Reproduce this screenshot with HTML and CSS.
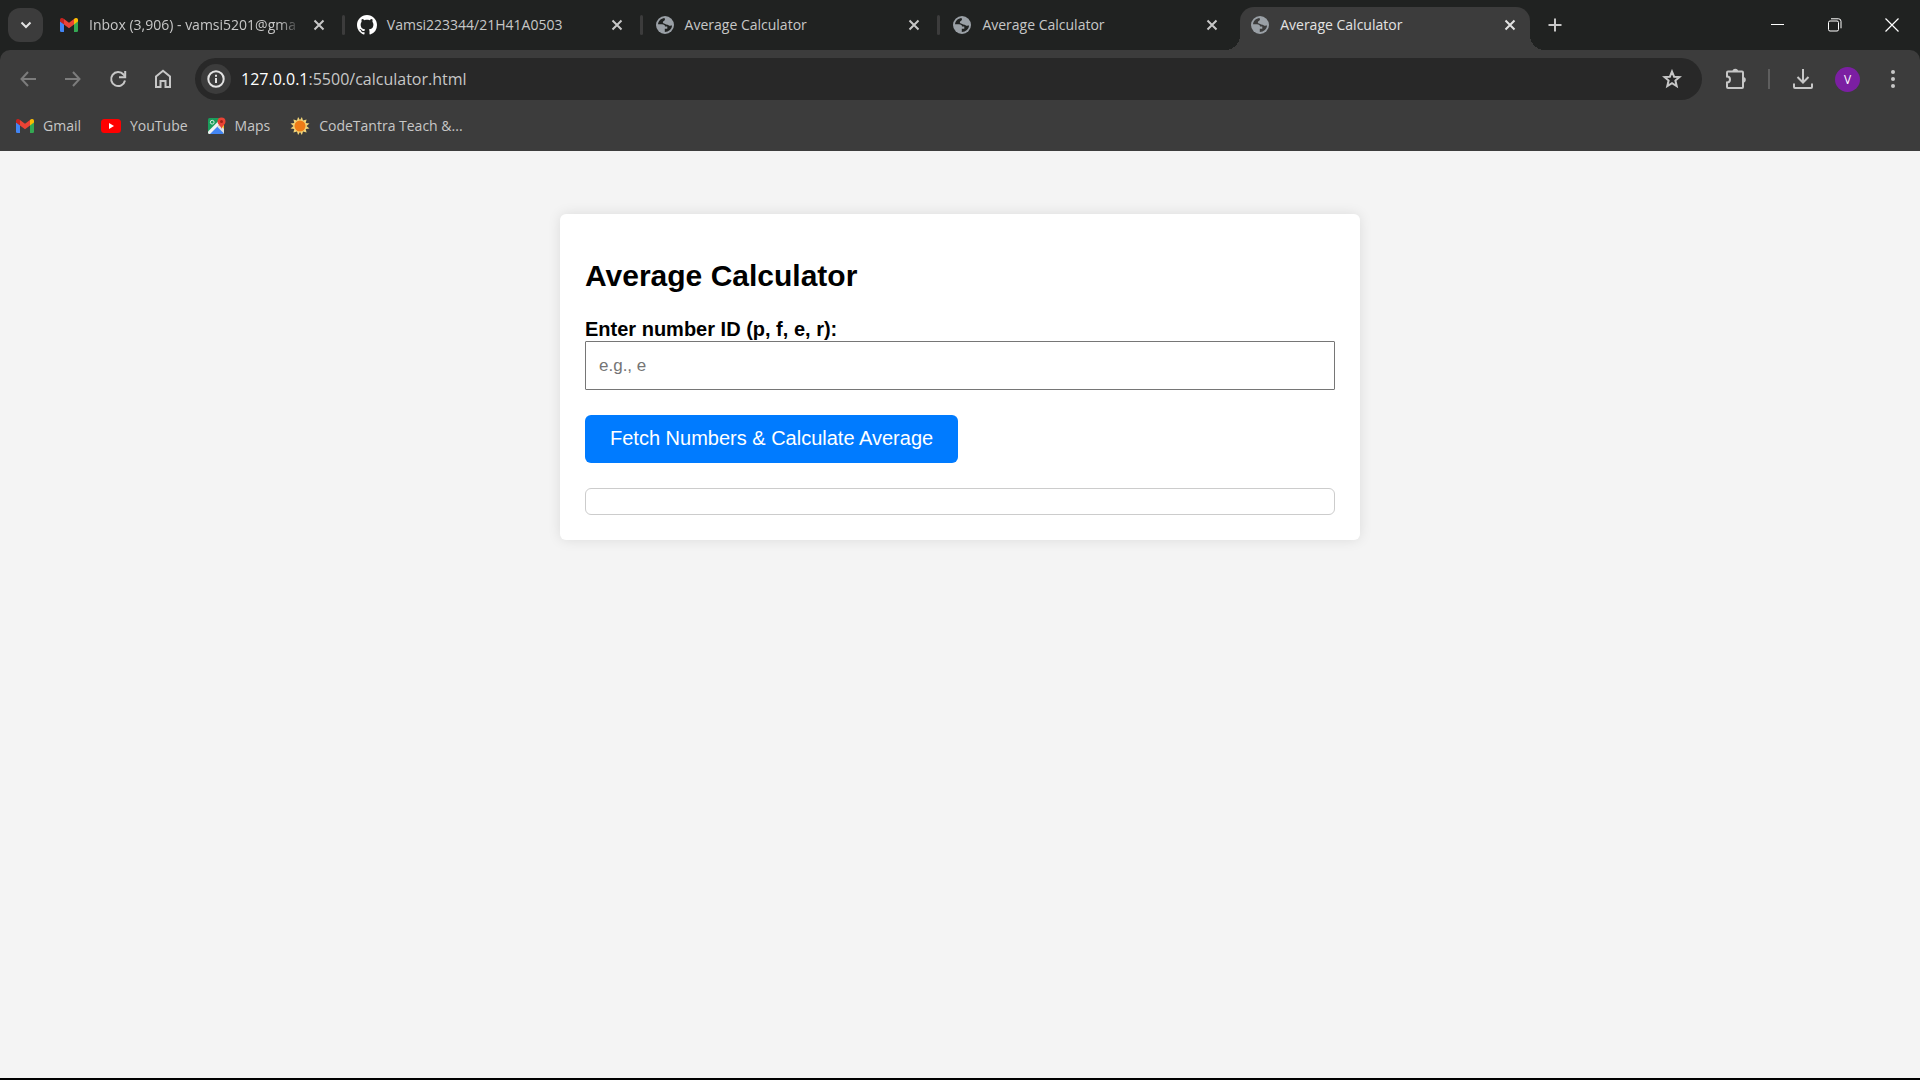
FILE: index.html
```html
<!DOCTYPE html>
<html lang="en">
<head>
<meta charset="utf-8">
<title>Average Calculator</title>
<link rel="stylesheet" href="styles.css">
</head>
<body>
<svg class="sprite" aria-hidden="true">
  <symbol id="gmail" viewBox="0 0 18 14">
    <path fill="#4285f4" d="M0 3l4 3v8H1.300A1.300 1.300 0 0 1 0 12.700z"/>
    <path fill="#34a853" d="M14 6l4-3v9.700a1.300 1.300 0 0 1-1.300 1.300H14z"/>
    <path fill="#ea4335" d="M4 1l5 3.800L14 1v5.500L9 10.300 4 6.500z"/>
    <path fill="#c5221f" d="M0 2C0 .1 2-.6 3.400.5L4 1v5.500L0 3.500z"/>
    <path fill="#fbbc04" d="M18 2c0-1.900-2-2.600-3.400-1.500L14 1v5.500l4-3z"/>
  </symbol>
  <symbol id="globe" viewBox="0 0 18 18">
    <circle cx="9" cy="9" r="9" fill="#9aa0a6"/>
    <path fill="var(--land)" d="M8.500 1.900C5 2.200 2.200 5 2 8.300H6C8 8.300 9 9.300 9 10.500H11.300V12.800H8.800V16C12.800 16 16 13 16 9.600 14.800 9.600 13.600 10 12.500 9.200 11.500 8.400 10.600 8.700 9.600 8.200 8.700 7.600 6.800 7.400 6.800 6.200 6.800 5 9 5 9 3.600z"/>
  </symbol>
  <symbol id="close" viewBox="0 0 12 12"><path d="M1.500 1.500l9 9M10.500 1.500l-9 9" fill="none" stroke="currentColor" stroke-width="2"/></symbol>
</svg>

<header class="browser">
  <div class="tabstrip">
    <button class="tab-search" aria-label="Search tabs"><svg width="12" height="8" viewBox="0 0 12 8"><path d="M1.500 1.500L6 6l4.500-4.500" fill="none" stroke="currentColor" stroke-width="2"/></svg></button>
    <nav class="tabs" aria-label="Tabs">
      <div class="tab divided">
        <span class="favicon"><svg width="18" height="14"><use href="#gmail"/></svg></span>
        <a class="tab-title fade" href="#">Inbox (3,906) - vamsi5201@gma</a>
        <button class="tab-close" aria-label="Close tab"><svg width="12" height="12"><use href="#close"/></svg></button>
      </div>
      <div class="tab divided">
        <span class="favicon"><svg width="20" height="20" viewBox="0 0 16 16"><path fill="#fff" d="M8 0C3.580 0 0 3.580 0 8c0 3.540 2.290 6.530 5.470 7.590.4.070.55-.17.55-.38 0-.19-.01-.82-.01-1.490-2.010.37-2.530-.49-2.690-.94-.09-.23-.48-.94-.82-1.130-.28-.15-.68-.52-.01-.53.63-.01 1.080.58 1.230.82.72 1.210 1.870.87 2.330.66.070-.52.28-.87.51-1.070-1.780-.2-3.640-.89-3.640-3.950 0-.87.31-1.590.82-2.150-.08-.2-.36-1.020.08-2.120 0 0 .67-.21 2.200.82.64-.18 1.320-.27 2-.27s1.360.09 2 .27c1.530-1.040 2.200-.82 2.200-.82.44 1.100.16 1.920.08 2.120.51.56.82 1.270.82 2.150 0 3.070-1.870 3.750-3.650 3.950.29.25.54.73.54 1.480 0 1.070-.01 1.930-.01 2.200 0 .21.15.46.55.38A8.010 8.010 0 0 0 16 8c0-4.420-3.580-8-8-8z"/></svg></span>
        <a class="tab-title" href="#">Vamsi223344/21H41A0503</a>
        <button class="tab-close" aria-label="Close tab"><svg width="12" height="12"><use href="#close"/></svg></button>
      </div>
      <div class="tab divided">
        <span class="favicon"><svg width="18" height="18"><use href="#globe"/></svg></span>
        <a class="tab-title" href="#">Average Calculator</a>
        <button class="tab-close" aria-label="Close tab"><svg width="12" height="12"><use href="#close"/></svg></button>
      </div>
      <div class="tab">
        <span class="favicon"><svg width="18" height="18"><use href="#globe"/></svg></span>
        <a class="tab-title" href="#">Average Calculator</a>
        <button class="tab-close" aria-label="Close tab"><svg width="12" height="12"><use href="#close"/></svg></button>
      </div>
      <div class="tab active">
        <span class="favicon"><svg width="18" height="18"><use href="#globe"/></svg></span>
        <a class="tab-title" href="#" aria-current="page">Average Calculator</a>
        <button class="tab-close" aria-label="Close tab"><svg width="12" height="12"><use href="#close"/></svg></button>
      </div>
    </nav>
    <button class="new-tab" aria-label="New tab"><svg width="14" height="14" viewBox="0 0 14 14"><path d="M7 .5v13M.5 7h13" stroke="currentColor" stroke-width="2"/></svg></button>
    <div class="window-controls">
      <button aria-label="Minimize"><svg width="14" height="14" viewBox="0 0 14 14"><path d="M0 6.500h13" stroke="currentColor"/></svg></button>
      <button aria-label="Restore"><svg width="14" height="14" viewBox="0 0 14 14" fill="none" stroke="currentColor"><rect x=".5" y="3" width="10" height="10" rx="1.500"/><path d="M3 .8h7.500a2.500 2.500 0 0 1 2.500 2.500v7"/></svg></button>
      <button aria-label="Close"><svg width="14" height="14" viewBox="0 0 14 14"><path d="M.5.5l13 13M13.500.5l-13 13" stroke="currentColor" stroke-width="1.200"/></svg></button>
    </div>
  </div>

  <div class="chrome">
    <div class="toolbar">
      <button class="tool dim" aria-label="Back"><svg width="16" height="16" viewBox="0 0 16 16"><path d="M16 8H2M8 1L1.500 8 8 15" fill="none" stroke="currentColor" stroke-width="2"/></svg></button>
      <button class="tool dim" aria-label="Forward"><svg width="16" height="16" viewBox="0 0 16 16"><path d="M0 8h14M8 1l6.500 7L8 15" fill="none" stroke="currentColor" stroke-width="2"/></svg></button>
      <button class="tool" aria-label="Reload"><svg width="18" height="18" viewBox="0 0 18 18" fill="none" stroke="currentColor" stroke-width="2"><path d="M16 10.500A7 7 0 1 1 14.500 4.500L16 6.500"/><path d="M16.200 1v6.300H10"/></svg></button>
      <button class="tool" aria-label="Home"><svg width="18" height="20" viewBox="0 0 18 20" fill="none" stroke="currentColor" stroke-width="2"><path d="M2 7.500l7-5.700 7 5.700V18h-4.500v-6h-5v6H2z"/></svg></button>
      <div class="address">
        <button class="site-info" aria-label="Site information"><svg width="18" height="18" viewBox="0 0 18 18"><circle cx="9" cy="9" r="7.700" fill="none" stroke="currentColor" stroke-width="2"/><path d="M9 8v5M9 4.700v2" stroke="currentColor" stroke-width="2"/></svg></button>
        <a class="url" href="#"><span class="host">127.0.0.1</span>:5500/calculator.html</a>
        <button class="star" aria-label="Bookmark this tab"><svg width="20" height="20" viewBox="0 0 20 20"><path d="M10 2.500l2.100 5.200 5.400.4-4.100 3.500 1.300 5.400L10 14.100 5.300 17l1.300-5.400-4.100-3.500 5.400-.4z" fill="none" stroke="currentColor" stroke-width="2"/></svg></button>
      </div>
      <button class="tool" aria-label="Extensions"><svg width="22" height="22" viewBox="0 0 22 22"><path d="M2 4.500Q2 3.500 3 3.500H17q1 0 1 1V19q0 1-1 1H3q-1 0-1-1v-4.500a3 3 0 0 0 0-6z" fill="none" stroke="currentColor" stroke-width="2"/><path fill="currentColor" d="M7.500 3.500a2.800 2.800 0 0 1 5.600 0zM18 9a2.800 2.800 0 0 1 0 5.600z"/></svg></button>
      <span class="tool-divider"></span>
      <button class="tool" aria-label="Downloads"><svg width="20" height="20" viewBox="0 0 20 20" fill="none" stroke="currentColor" stroke-width="2"><path d="M10 0v13M4.500 8l5.500 5.500L15.500 8M1 14.500V18q0 1 1 1h16q1 0 1-1v-3.500"/></svg></button>
      <button class="tool" aria-label="Profile"><span class="avatar">V</span></button>
      <button class="tool" aria-label="Menu"><svg width="4" height="18" viewBox="0 0 4 18" fill="currentColor"><circle cx="2" cy="2" r="2"/><circle cx="2" cy="9" r="2"/><circle cx="2" cy="16" r="2"/></svg></button>
    </div>

    <nav class="bookmarks" aria-label="Bookmarks">
      <a href="#"><svg width="18" height="14"><use href="#gmail"/></svg>Gmail</a>
      <a href="#"><svg width="20" height="14" viewBox="0 0 20 14"><rect width="20" height="14" rx="3.500" fill="#f00"/><path d="M8 4l5 3-5 3z" fill="#fff"/></svg>YouTube</a>
      <a href="#"><svg width="18" height="18" viewBox="0 0 18 18"><rect y="1" width="16" height="16" rx="1.500" fill="#1a9c5b"/><path d="M10 8l6-2v9.500q0 1.500-1.500 1.500z" fill="#fbc02d"/><path d="M1 17l8-8.500 7 7.500-1 1z" fill="#4285f4"/><path d="M0 14.500L11.500 3 13 6 2 17H1.500Q0 17 0 15.500z" fill="#f1f1f1"/><path d="M9 9.500l7 7V12l-4-4z" fill="#dce0e6"/><circle cx="4.200" cy="5.200" r="1.900" fill="none" stroke="#d8f0e0"/><path d="M13.500 12c-.3-3-4-4-4-7.500a4 4 0 0 1 8 0c0 3.500-3.700 4.500-4 7.500z" fill="#ea4335"/><circle cx="13.500" cy="4.500" r="1.500" fill="#9f2219"/></svg>Maps</a>
      <a href="#"><svg width="20" height="18" viewBox="-1 0 20 18"><path d="M9 3L10.900 0 12 3.600 15.600 2.400 14.700 6 18.500 6.600 15.500 9 18.500 11.400 14.700 12 15.600 15.600 12 14.400 10.900 18 9 15 7.100 18 6 14.400 2.400 15.600 3.300 12-.5 11.400 2.500 9-.5 6.600 3.300 6 2.400 2.400 6 3.600 7.100 0z" fill="#f3d477"/><circle cx="9" cy="9" r="5.500" fill="#ee7c16"/></svg>CodeTantra Teach &amp;...</a>
    </nav>
  </div>
</header>

<main class="page">
  <form class="card">
    <h1>Average Calculator</h1>
    <label for="number-id">Enter number ID (p, f, e, r):</label>
    <input id="number-id" type="text" placeholder="e.g., e">
    <button class="submit" type="button">Fetch Numbers &amp; Calculate Average</button>
    <output class="result" for="number-id"></output>
  </form>
</main>
</body>
</html>
```
FILE: styles.css
```css
* {
  box-sizing: border-box;
}

body {
  margin: 0;
  min-height: 100vh;
  display: flex;
  flex-direction: column;
  font-family: "Liberation Sans", Arial, sans-serif;
  background: #f4f4f4;
  border-bottom: 2px solid #000;
}

button {
  margin: 0;
  padding: 0;
  border: 0;
  background: none;
  color: inherit;
  font: inherit;
}

a {
  color: inherit;
  text-decoration: none;
}

svg {
  display: block;
  flex: none;
}

.sprite {
  position: absolute;
  width: 0;
  height: 0;
}

/* Browser frame */
.browser {
  --land: #202221;
  background: #202221;
  color: #c7c7c7;
  font-family: "Open Sans", "Noto Sans", sans-serif;
  font-size: 14px;
  line-height: 20px;
}

.tabstrip {
  display: flex;
  height: 50px;
  padding-left: 8px;
}

.tab-search {
  display: grid;
  place-items: center;
  width: 35px;
  height: 34px;
  margin: 8px 6px 0 0;
  border-radius: 12px;
  background: #3c3c3c;
  color: #e3e3e3;
}

.tabs {
  display: flex;
  flex: 0 1 1481px;
  min-width: 0;
  gap: 8px;
  padding-top: 7px;
}

.tab {
  position: relative;
  display: flex;
  flex: 1 1 0;
  min-width: 0;
  align-items: center;
  padding: 0 14px 7px 10px;
}

.favicon {
  display: grid;
  place-items: center;
  width: 20px;
  margin-right: 10px;
}

.divided::after {
  content: "";
  position: absolute;
  top: 8px;
  right: -6px;
  width: 3px;
  height: 20px;
  border-radius: 2px;
  background: #3c3c3c;
}

.tab-title {
  flex: 1;
  min-width: 0;
  margin-right: 12px;
  white-space: nowrap;
}

.fade {
  -webkit-mask-image: linear-gradient(to right, #000 190px, transparent 212px);
  mask-image: linear-gradient(to right, #000 190px, transparent 212px);
}

.active {
  --land: #3c3c3c;
  border-radius: 14px 14px 0 0;
  background: #3c3c3c;
  color: #e3e3e3;
}

.active::before,
.active::after {
  content: "";
  position: absolute;
  bottom: 0;
  width: 15px;
  height: 15px;
}

.active::before {
  right: 100%;
  background: radial-gradient(circle at 0 0, transparent 15px, #3c3c3c 15px);
}

.active::after {
  left: 100%;
  background: radial-gradient(circle at 100% 0, transparent 15px, #3c3c3c 15px);
}

.new-tab {
  display: grid;
  place-items: center;
  width: 34px;
  margin-left: 8px;
}

.window-controls {
  display: flex;
  margin-left: auto;
  color: #fff;
}

.window-controls button {
  display: grid;
  place-items: center;
  width: 57px;
}

.chrome {
  padding-bottom: 10px;
  border-radius: 10px 10px 0 0;
  background: #3c3c3c;
}

.toolbar {
  display: flex;
  align-items: center;
  padding: 8px 5px 0;
}

.tool {
  display: grid;
  place-items: center;
  width: 45px;
  height: 42px;
}

.dim {
  color: #7c7c7c;
}

.address {
  display: flex;
  flex: 1;
  align-items: center;
  min-width: 0;
  height: 42px;
  margin: 0 11px 0 10px;
  padding: 0 20px 0 6px;
  border-radius: 21px;
  background: #282828;
}

.site-info {
  display: grid;
  place-items: center;
  width: 30px;
  height: 30px;
  margin-right: 10px;
  border-radius: 50%;
  background: #3c3c3c;
  color: #e3e3e3;
}

.url {
  flex: 1;
  font-size: 16px;
}

.host {
  color: #fff;
}

.tool-divider {
  width: 2px;
  height: 20px;
  margin: 0 10px;
  background: #5e5e5e;
}

.avatar {
  width: 25px;
  height: 25px;
  border-radius: 50%;
  background: #7b1fa2;
  color: #fff;
  font-size: 12px;
  line-height: 25px;
  text-align: center;
}

.bookmarks {
  display: flex;
  gap: 20px;
  padding: 10px 16px 0;
}

.bookmarks a {
  display: flex;
  align-items: center;
  height: 31px;
  gap: 9px;
}

/* Calculator */
.page {
  flex: 1;
  padding: 63px 20px;
}

.card {
  max-width: 800px;
  margin: 0 auto;
  padding: 45px 25px 25px;
  border-radius: 6px;
  background: #fff;
  box-shadow: 0 0 13px rgba(0, 0, 0, 0.1);
  color: #000;
}

h1 {
  margin: 0 0 25px;
  font-size: 30px;
  line-height: 34px;
}

label {
  display: block;
  font-size: 20px;
  font-weight: bold;
  line-height: 23px;
}

input {
  display: block;
  width: 100%;
  height: 49px;
  margin: 0 0 25px;
  padding: 0 13px;
  border: 1px solid #767676;
  border-radius: 1px;
  font: 17px "Liberation Sans", Arial, sans-serif;
}

input::placeholder {
  color: #757575;
}

.submit {
  display: block;
  padding: 12px 25px 13px;
  border-radius: 6px;
  background: #007bff;
  color: #fff;
  font-size: 20px;
  line-height: 23px;
}

.result {
  display: block;
  min-height: 27px;
  margin-top: 25px;
  padding: 12px;
  border: 1px solid #ccc;
  border-radius: 6px;
}
```
